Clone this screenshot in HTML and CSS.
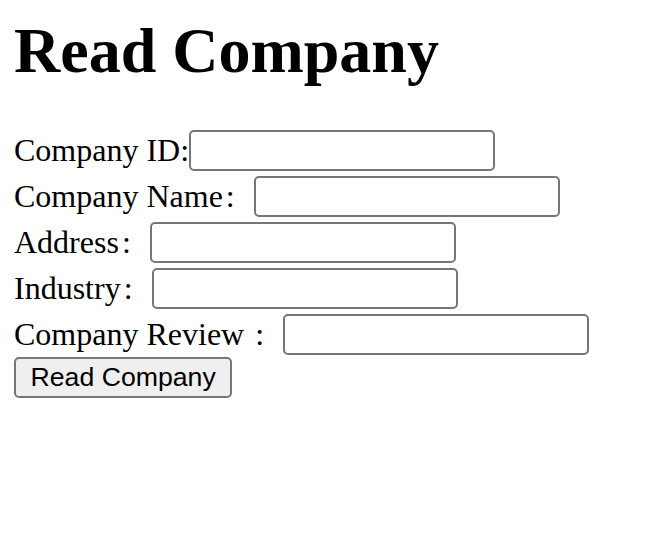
FILE: index.html
```html
<!DOCTYPE html>
<html>
<head>
<meta charset="utf-8">
<title>Read Company</title>
<link rel="stylesheet" href="styles.css">
</head>
<body class="page">
<h1 class="title">Read Company</h1>
<form class="form">
<div class="row"><label class="label">Company ID:</label><input class="field" type="text"></div>
<div class="row"><label class="label">Company Name<span class="colon">:</span></label><input class="field" type="text"></div>
<div class="row"><label class="label">Address<span class="colon">:</span></label><input class="field" type="text"></div>
<div class="row"><label class="label">Industry<span class="colon">:</span></label><input class="field" type="text"></div>
<div class="row"><label class="label">Company Review <span class="colon">:</span></label><input class="field" type="text"></div>
<div class="actions"><button class="btn" type="button">Read Company</button></div>
</form>
</body>
</html>
```
FILE: styles.css
```css
html, body {
  background: #ffffff;
}
.page {
  margin: 14px;
  font-family: "Liberation Serif", "Times New Roman", serif;
  color: #000000;
}
.title {
  font-size: 64px;
  font-weight: bold;
  margin: 0 0 39px 0;
  line-height: normal;
}
.form {
  margin: 0;
  display: flex;
  flex-direction: column;
}
.row {
  display: flex;
  align-items: center;
  height: 46px;
}
.label {
  font-size: 32px;
  line-height: normal;
  white-space: pre;
}
.colon {
  display: inline-block;
  box-sizing: border-box;
  width: 31px;
  padding-left: 3px;
}
.field {
  box-sizing: border-box;
  width: 306px;
  height: 41px;
  margin: 0;
  border: 2px solid #767676;
  border-radius: 5px;
  background: #ffffff;
  padding: 2px 4px;
  font-family: "Liberation Sans", Arial, sans-serif;
  font-size: 26.67px;
}
.actions {
  display: flex;
}
.btn {
  box-sizing: border-box;
  height: 41px;
  margin: 0;
  padding: 0 14.5px;
  border: 2px solid #767676;
  border-radius: 5px;
  background: #efefef;
  color: #000000;
  font-family: "Liberation Sans", Arial, sans-serif;
  font-size: 26.67px;
}
```
